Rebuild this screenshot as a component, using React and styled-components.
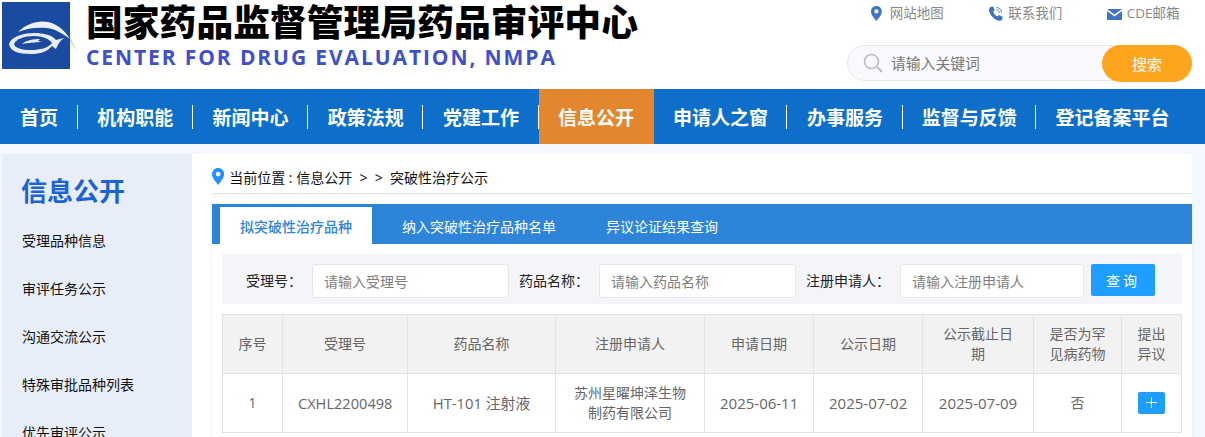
import React from "react";
import styled, { createGlobalStyle } from "styled-components";
import { Plus } from "lucide-react";

const GlobalStyle = createGlobalStyle`
  html, body {
    margin: 0;
    padding: 0;
    height: 437px;
    overflow: hidden;
    background: #f3f7fe;
    font-family: "Open Sans", "Noto Sans CJK SC", sans-serif;
  }
  * {
    box-sizing: border-box;
  }
`;

const Header = styled.header`
  height: 89px;
  background: #fff;
  display: flex;
  justify-content: space-between;
  padding: 2px 13px 0 2px;
`;

const Brand = styled.div`
  display: flex;
  gap: 8px;
`;

const BrandText = styled.div`
  display: flex;
  flex-direction: column;
`;

const Title = styled.h1`
  margin: 0;
  font-size: 36.8px;
  line-height: 37px;
  font-weight: 900;
  color: #000;
  white-space: nowrap;
  font-family: "Noto Sans CJK SC", sans-serif;
`;

const SubTitle = styled.div`
  margin-top: 4px;
  font-size: 21px;
  line-height: 28px;
  font-weight: 700;
  letter-spacing: 1.9px;
  color: #3f51c9;
  white-space: nowrap;
`;

const HeaderRight = styled.div`
  width: 345px;
  display: flex;
  flex-direction: column;
`;

const TopLinks = styled.div`
  display: flex;
  height: 43px;
  padding-left: 24px;
  gap: 44.5px;
`;

const TopLink = styled.a`
  display: flex;
  align-items: flex-start;
  gap: ${(p) => p.$gap}px;
  font-size: 13.5px;
  line-height: 22px;
  color: #888;
  white-space: nowrap;
`;

const IconSlot = styled.span`
  display: block;
  flex: none;
  line-height: 0;
  margin-top: ${(p) => p.$top}px;
`;

const SearchBox = styled.div`
  position: relative;
  height: 36px;
  border: 1px solid #e6e6e6;
  border-radius: 18px;
  background: #f9fafd;
  display: flex;
  align-items: center;
  padding: 0 0 1px 15px;
  gap: 8px;
  font-size: 14.8px;
  color: #777;
`;

const SearchButton = styled.button`
  position: absolute;
  right: -1px;
  top: -1px;
  width: 90px;
  height: 37px;
  padding: 0;
  border: none;
  border-radius: 19px;
  background: #ffa41f;
  color: #fff;
  font-size: 15px;
  font-family: inherit;
`;

const Nav = styled.nav`
  height: 55px;
  padding-left: 0.5px;
  background: #0e6fcb;
  display: flex;
  align-items: center;
`;

const NavItem = styled.a`
  position: relative;
  height: 55px;
  padding: 0 ${(p) => (p.$wide ? 19.3 : 19.6)}px;
  display: flex;
  align-items: center;
  font-size: 19px;
  font-weight: 700;
  color: #fff;
  white-space: nowrap;
  font-family: "Noto Sans CJK SC", sans-serif;
  background: ${(p) => (p.$active ? "#e4862d" : "transparent")};
  &::after {
    content: "";
    display: ${(p) => (p.$last || p.$active ? "none" : "block")};
    position: absolute;
    right: 0;
    top: 16px;
    height: 24px;
    width: 1px;
    background: #fff;
  }
`;

const Body = styled.div`
  display: flex;
  padding: 10px 13px 0 2px;
`;

const Sidebar = styled.aside`
  width: 190px;
  height: 283px;
  flex: none;
  background: #e8eef7;
  padding: 0 20px;
  overflow: hidden;
`;

const SideTitle = styled.div`
  margin: 19px 0 0 -1px;
  font-size: 26px;
  line-height: 34px;
  font-weight: 700;
  color: #1b63d6;
  font-family: "Noto Sans CJK SC", sans-serif;
`;

const SideList = styled.div`
  margin-top: 10px;
`;

const SideItem = styled.div`
  height: 48px;
  line-height: 48px;
  font-size: 14px;
  color: #111;
`;

const Main = styled.main`
  flex: 1;
  background: #fff;
  padding-left: 20px;
`;

const Crumb = styled.div`
  height: 40px;
  border-bottom: 1px solid #e4e4e4;
  display: flex;
  align-items: center;
  gap: 5px;
  font-size: 14px;
  color: #111;
  padding-top: 6px;
  white-space: pre;
`;

const Panel = styled.section`
  margin-top: 10px;
  background: #fff;
  box-shadow: 0 0 3px rgba(0, 0, 0, 0.08);
`;

const Tabs = styled.div`
  height: 40px;
  background: #2d84d8;
  display: flex;
  align-items: flex-end;
  gap: 10px;
  padding-left: 8px;
`;

const Tab = styled.div`
  height: 37px;
  padding: 0 20px;
  display: flex;
  align-items: center;
  font-size: 14px;
  font-weight: ${(p) => (p.$active ? 500 : 400)};
  color: ${(p) => (p.$active ? "#2d84d8" : "#fff")};
  background: ${(p) => (p.$active ? "#fff" : "transparent")};
`;

const PanelBody = styled.div`
  padding: 10px 10px 20px;
`;

const Filter = styled.form`
  height: 50px;
  background: #f3f5f9;
  display: flex;
  align-items: flex-start;
  padding: 10px 0 0 24px;
  font-size: 14px;
  color: #222;
`;

const FilterLabel = styled.label`
  width: ${(p) => p.$w}px;
  line-height: 34px;
  white-space: nowrap;
`;

const FilterInput = styled.input`
  width: ${(p) => p.$w}px;
  height: 34px;
  margin-right: 10px;
  padding: 0 11px;
  border: 1px solid #e6e6e6;
  border-radius: 3px;
  background: #fff;
  font-size: 14px;
  font-family: inherit;
  outline: none;
  &::placeholder {
    color: #808080;
  }
`;

const QueryButton = styled.button`
  width: 64px;
  height: 32px;
  margin-left: -3px;
  border: none;
  border-radius: 2px;
  background: #1e9fff;
  color: #fff;
  font-size: 14px;
  letter-spacing: 3px;
  font-family: inherit;
`;

const Table = styled.table`
  width: 959px;
  margin-top: 10px;
  table-layout: fixed;
  border-collapse: collapse;
  color: #666;
  text-align: center;
`;

const Th = styled.th`
  height: 59px;
  padding: 0 15px;
  border: 1px solid #e2e2e2;
  background: #f2f2f2;
  font-size: 14px;
  line-height: 20px;
  font-weight: 400;
`;

const Td = styled.td`
  height: 59px;
  padding: 0 15px 1px;
  border: 1px solid #e2e2e2;
  font-size: ${(p) => p.$size || 14}px;
  line-height: 20px;
  white-space: ${(p) => (p.$size ? "nowrap" : "normal")};
`;

const AddButton = styled.button`
  width: 27px;
  height: 22px;
  padding: 0;
  border: none;
  border-radius: 2px;
  background: #1e9fff;
  color: #fff;
  display: inline-flex;
  align-items: center;
  justify-content: center;
  vertical-align: middle;
`;

const Logo = () => (
  <svg width="76" height="67" viewBox="0 0 76 67">
    <defs>
      <filter id="soft">
        <feGaussianBlur stdDeviation="0.6" />
      </filter>
    </defs>
    <path d="M64 30C68 35 72 42 75 49C71 43 67 38 62 33Z" fill="#ccd6e4" filter="url(#soft)" />
    <rect width="68" height="67" fill="#1a4ba0" />
    <g filter="url(#soft)">
      <path d="M16 30C24 22 36 18 46 20C56 22 63 29 68 37C60 31 53 27 45 26C35 25 25 26 16 30Z" fill="#eef2f8" />
      <path d="M7 42C9 35 20 31 32 31C42 31 50 33 54 38L62 36C58 39 56 42 54 47L50 44C45 50 38 52 29 52C16 52 8 49 7 42Z" fill="#e8edf5" />
      <path d="M12 42C14 37 22 34 32 34C41 34 47 37 50 41C46 46 38 48 29 48C20 48 13 46 12 42Z" fill="#1a4ba0" />
      <path d="M20 42C24 38 32 37 38 37L36 39L40 40C33 40 26 41 20 42Z" fill="#e8edf5" />
    </g>
  </svg>
);

const PinIcon = ({ size = 15, color = "#3f74c4" }) => (
  <svg width={size * 0.72} height={size} viewBox="0 0 18 25">
    <path
      fill={color}
      fillRule="evenodd"
      d="M9 0C4 0 0 4 0 9C0 15 6 21 9 25C12 21 18 15 18 9C18 4 14 0 9 0ZM9 5.5A3.5 3.5 0 1 1 9 12.5A3.5 3.5 0 1 1 9 5.5Z"
    />
  </svg>
);

const PhoneIcon = () => (
  <svg width="16" height="15" viewBox="0 0 16 16">
    <path
      fill="#3f74c4"
      d="M2 1L5 .5L6.6 4.5L5 6C5.6 8 7.6 10.2 9.6 11L11.2 9.6L15 11.5L14.6 14.6C13 16 10.5 16 8 14.6C4.6 12.6 2 9.6.8 6C.2 4 .6 2.2 2 1Z"
    />
    <path fill="none" stroke="#3f74c4" strokeWidth="1" d="M8.5 1.5C11.5 1.8 13.8 4 14 7M8.5 4C10.2 4.2 11.4 5.4 11.6 7" />
  </svg>
);

const MailIcon = () => (
  <svg width="15" height="11" viewBox="0 0 15 11">
    <path fill="#3f74c4" d="M0 0H15L7.5 5.5ZM0 2L7.5 7.5L15 2V11H0Z" />
  </svg>
);

const SearchIcon = () => (
  <svg width="20" height="20" viewBox="0 0 20 20">
    <circle cx="8.5" cy="8.5" r="7" fill="none" stroke="#bbb" strokeWidth="1.6" />
    <path d="M14 14L19 19" stroke="#bbb" strokeWidth="2" />
  </svg>
);

const navItems = ["首页", "机构职能", "新闻中心", "政策法规", "党建工作", "信息公开", "申请人之窗", "办事服务", "监督与反馈", "登记备案平台"];
const sideItems = ["受理品种信息", "审评任务公示", "沟通交流公示", "特殊审批品种列表", "优先审评公示"];
const columns = [
  { w: 60, label: "序号" },
  { w: 125, label: "受理号" },
  { w: 148, label: "药品名称" },
  { w: 149, label: "注册申请人" },
  { w: 109, label: "申请日期" },
  { w: 109, label: "公示日期" },
  { w: 111, label: "公示截止日期" },
  { w: 88, label: "是否为罕见病药物" },
  { w: 60, label: "提出异议" },
];

export default function App() {
  return (
    <>
      <GlobalStyle />
      <Header>
        <Brand>
          <Logo />
          <BrandText>
            <Title>国家药品监督管理局药品审评中心</Title>
            <SubTitle>CENTER FOR DRUG EVALUATION, NMPA</SubTitle>
          </BrandText>
        </Brand>
        <HeaderRight>
          <TopLinks>
            <TopLink $gap={8}>
              <IconSlot $top={4}>
                <PinIcon />
              </IconSlot>
              网站地图
            </TopLink>
            <TopLink $gap={4}>
              <IconSlot $top={4}>
                <PhoneIcon />
              </IconSlot>
              联系我们
            </TopLink>
            <TopLink $gap={5}>
              <IconSlot $top={7}>
                <MailIcon />
              </IconSlot>
              CDE邮箱
            </TopLink>
          </TopLinks>
          <SearchBox>
            <SearchIcon />
            请输入关键词
            <SearchButton>搜索</SearchButton>
          </SearchBox>
        </HeaderRight>
      </Header>
      <Nav>
        {navItems.map((item, i) => (
          <NavItem key={item} $active={item === "信息公开"} $wide={item.length > 4} $last={i === navItems.length - 1}>
            {item}
          </NavItem>
        ))}
      </Nav>
      <Body>
        <Sidebar>
          <SideTitle>信息公开</SideTitle>
          <SideList>
            {sideItems.map((item) => (
              <SideItem key={item}>{item}</SideItem>
            ))}
          </SideList>
        </Sidebar>
        <Main>
          <Crumb>
            <PinIcon size={17} color="#1e90ff" />
            当前位置 : 信息公开  &gt;  &gt;  突破性治疗公示
          </Crumb>
          <Panel>
            <Tabs>
              <Tab $active>拟突破性治疗品种</Tab>
              <Tab>纳入突破性治疗品种名单</Tab>
              <Tab>异议论证结果查询</Tab>
            </Tabs>
            <PanelBody>
              <Filter>
                <FilterLabel $w={66}>受理号：</FilterLabel>
                <FilterInput $w={197} placeholder="请输入受理号" />
                <FilterLabel $w={80}>药品名称：</FilterLabel>
                <FilterInput $w={197} placeholder="请输入药品名称" />
                <FilterLabel $w={94}>注册申请人：</FilterLabel>
                <FilterInput $w={184} placeholder="请输入注册申请人" />
                <QueryButton type="button">查询</QueryButton>
              </Filter>
              <Table>
                <colgroup>
                  {columns.map((c) => (
                    <col key={c.label} width={c.w} />
                  ))}
                </colgroup>
                <thead>
                  <tr>
                    {columns.map((c) => (
                      <Th key={c.label}>{c.label}</Th>
                    ))}
                  </tr>
                </thead>
                <tbody>
                  <tr>
                    <Td>1</Td>
                    <Td $size={14.6}>CXHL2200498</Td>
                    <Td $size={14.8}>HT-101 注射液</Td>
                    <Td>苏州星曜坤泽生物制药有限公司</Td>
                    <Td $size={15}>2025-06-11</Td>
                    <Td $size={15}>2025-07-02</Td>
                    <Td $size={15}>2025-07-09</Td>
                    <Td>否</Td>
                    <Td>
                      <AddButton>
                        <Plus size={17} strokeWidth={1.4} />
                      </AddButton>
                    </Td>
                  </tr>
                </tbody>
              </Table>
            </PanelBody>
          </Panel>
        </Main>
      </Body>
    </>
  );
}
